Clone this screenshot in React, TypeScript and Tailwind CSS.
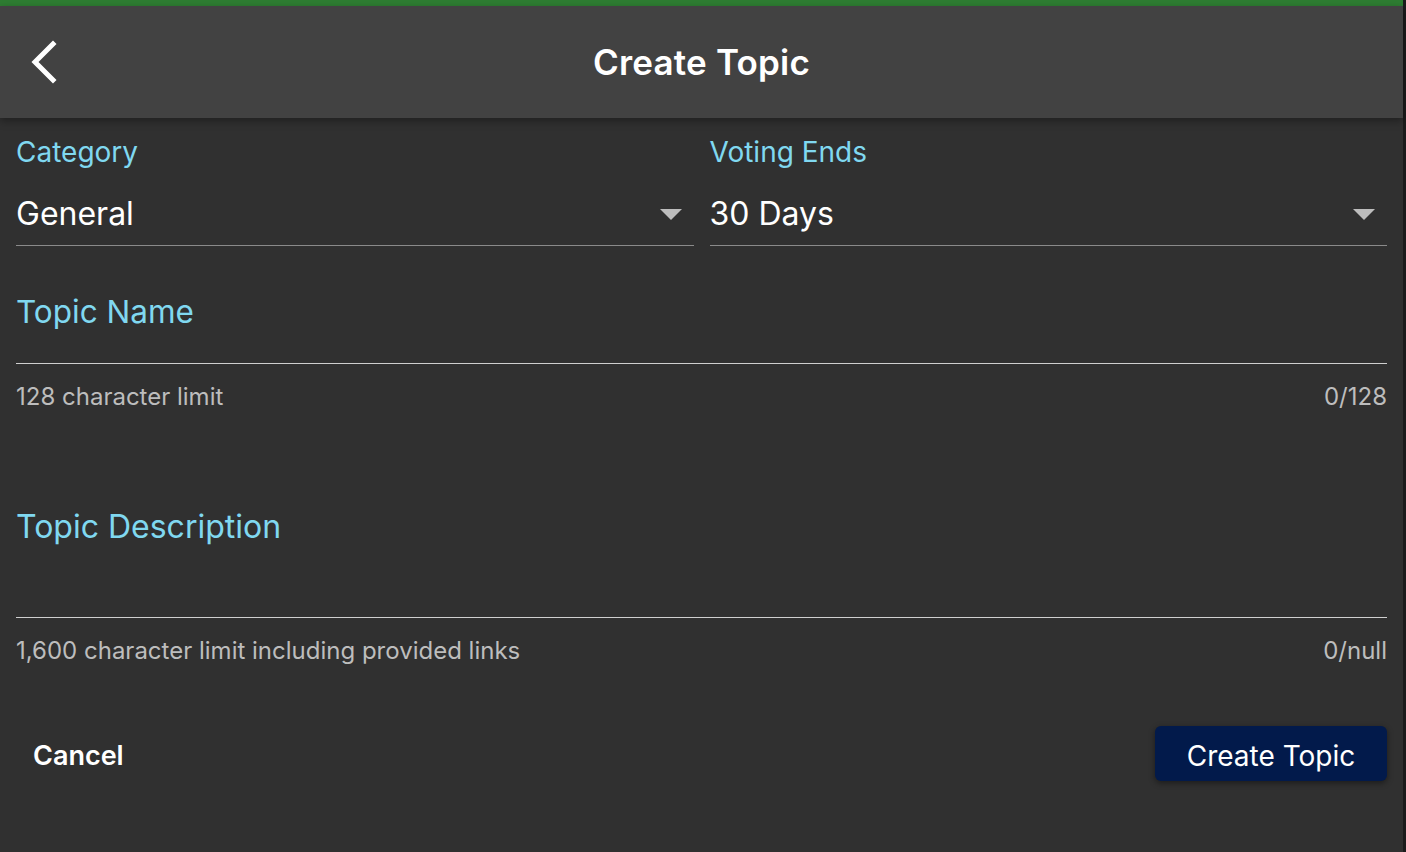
import React from "react";

function ChevronLeft() {
  return (
    <svg width="30" height="44" viewBox="0 0 30 44" fill="none">
      <path d="M24 4 L6 22 L24 40" stroke="#ffffff" strokeWidth="5" strokeLinecap="square" />
    </svg>
  );
}

function Caret() {
  return (
    <svg width="22" height="12" viewBox="0 0 22 12">
      <path d="M0 0 L22 0 L11 11 Z" fill="#bdbdbd" />
    </svg>
  );
}

function SelectField({ label, value }: { label: string; value: string }) {
  return (
    <div className="flex flex-col">
      <div className="text-[28px] leading-[30px] text-[#80d8f0]">{label}</div>
      <div className="flex items-center justify-between pt-[27px] pb-[11px] border-b border-[#8a8a8a]">
        <span className="text-[32px] leading-[40px] text-white">{value}</span>
        <span className="mr-[12px] mt-[2px]">
          <Caret />
        </span>
      </div>
    </div>
  );
}

export default function App() {
  return (
    <div
      className="flex w-[1406px] h-[852px] bg-[#303030]"
      style={{ fontFamily: "Inter, 'Noto Sans', sans-serif" }}
    >
      <div className="flex-1 flex flex-col">
        <div className="h-[6px] bg-[#2e7d32]" />
        <header className="relative z-10 h-[112px] bg-[#424242] flex items-center justify-center shadow-[0_3px_8px_rgba(0,0,0,0.35)]">
          <button className="absolute left-[29px] top-[34px]">
            <ChevronLeft />
          </button>
          <h1 className="text-[35px] font-semibold text-white tracking-[0.2px]">Create Topic</h1>
        </header>

        <main className="px-4 pt-[19px]">
          <div className="grid grid-cols-2 gap-4">
            <SelectField label="Category" value="General" />
            <SelectField label="Voting Ends" value="30 Days" />
          </div>

          <div className="mt-[47px] flex flex-col">
            <div className="text-[31.5px] leading-[38px] text-[#80d8f0]">Topic Name</div>
            <div className="h-[33px] border-b-[1.5px] border-[#cfcfcf]" />
            <div className="mt-[19px] flex justify-between text-[24px] leading-[28px] text-[#bdbdbd]">
              <span>128 character limit</span>
              <span>0/128</span>
            </div>
          </div>

          <div className="mt-[97px] flex flex-col">
            <div className="text-[32px] leading-[38px] text-[#80d8f0]">Topic Description</div>
            <div className="h-[72px] border-b-[1.5px] border-[#cfcfcf]" />
            <div className="mt-[19px] flex justify-between text-[24px] leading-[28px] text-[#bdbdbd]">
              <span>1,600 character limit including provided links</span>
              <span>0/null</span>
            </div>
          </div>

          <div className="mt-[61px] flex items-center justify-between">
            <button className="ml-[17px] pt-[6px] text-[27px] font-semibold text-white">Cancel</button>
            <button className="h-[55px] w-[232px] pt-[4px] rounded-[6px] bg-[#021a4b] text-[28px] text-white shadow-[0_2px_6px_rgba(0,0,0,0.45)]">
              Create Topic
            </button>
          </div>
        </main>
      </div>
      <div className="w-[3px] bg-[#1c1c1c]" />
    </div>
  );
}
